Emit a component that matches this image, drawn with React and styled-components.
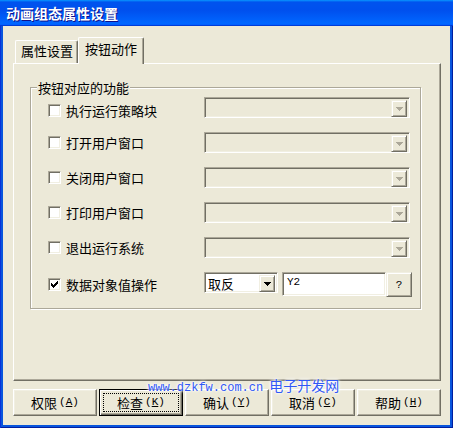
import styled, { createGlobalStyle, css } from 'styled-components';

const GlobalStyle = createGlobalStyle`
  html, body {
    margin: 0;
    padding: 0;
    background: #ece9d8;
  }
  body {
    font-family: "Noto Sans CJK SC", "Noto Sans", sans-serif;
    font-size: 13px;
    color: #000;
  }
  * {
    box-sizing: border-box;
  }
`;

const actions = [
  { label: '执行运行策略块', offset: 6 },
  { label: '打开用户窗口' },
  { label: '关闭用户窗口' },
  { label: '打印用户窗口' },
  { label: '退出运行系统' },
];

const buttons = [
  { text: '权限', key: 'A' },
  { text: '检查', key: 'K', primary: true },
  { text: '确认', key: 'Y' },
  { text: '取消', key: 'C' },
  { text: '帮助', key: 'H' },
];

const Arrow = ({ disabled }) => (
  <svg width="7" height="4" viewBox="0 0 7 4">
    <path
      d="M0 0h7v1h-1v1h-1v1h-1v1h-1v-1h-1v-1h-1v-1h-1z"
      fill={disabled ? '#aca899' : '#000'}
    />
  </svg>
);

const Check = () => (
  <svg width="7" height="7" viewBox="0 0 7 7">
    <path
      d="M0 2v3h1v1h1v1h1v-1h1v-1h1v-1h1v-1h1v-3h-1v1h-1v1h-1v1h-1v1h-1v-1h-1v-1z"
      fill="#000"
    />
  </svg>
);

const App = () => {
  return (
    <>
      <GlobalStyle />
      <Window>
        <TitleBar>
          <Title>动画组态属性设置</Title>
        </TitleBar>
        <Body>
          <TabStrip>
            <Tab>属性设置</Tab>
            <Tab $active>按钮动作</Tab>
          </TabStrip>
          <Panel>
            <Group>
              <Legend>按钮对应的功能</Legend>
              <Rows>
                {actions.map((a) => (
                  <Row key={a.label} $h={21}>
                    <Choice $offset={a.offset}>
                      <CheckBox />
                      <Label>{a.label}</Label>
                    </Choice>
                    <Combo $width={206} $disabled>
                      <ComboText />
                      <DropButton>
                        <Arrow disabled />
                      </DropButton>
                    </Combo>
                  </Row>
                ))}
                <Row $h={25}>
                  <Choice>
                    <CheckBox>
                      <Check />
                    </CheckBox>
                    <Label>数据对象值操作</Label>
                  </Choice>
                  <Controls>
                    <Combo $width={74}>
                      <ComboText>取反</ComboText>
                      <DropButton>
                        <Arrow />
                      </DropButton>
                    </Combo>
                    <TextField>Y2</TextField>
                    <SmallButton>?</SmallButton>
                  </Controls>
                </Row>
              </Rows>
            </Group>
          </Panel>
          <ButtonBar>
            {buttons.map((b) => (
              <DialogButton key={b.key} $primary={b.primary}>
                <FocusFrame $on={b.primary}>
                  {b.text}
                  <Key>
                    (<u>{b.key}</u>)
                  </Key>
                </FocusFrame>
              </DialogButton>
            ))}
          </ButtonBar>
        </Body>
        <Watermark>
          <Site>www.dzkfw.com.cn</Site>
          <SiteName>电子开发网</SiteName>
        </Watermark>
      </Window>
    </>
  );
};

const Window = styled.div`
  position: relative;
  width: 453px;
  height: 428px;
  display: flex;
  flex-direction: column;
  background: #0855dd;
  box-shadow: inset 1px 0 #0831d9, inset -1px 0 #001ea0, inset 0 -1px #001ea0;
`;

const TitleBar = styled.div`
  height: 26px;
  flex-shrink: 0;
  display: flex;
  align-items: center;
  padding-left: 6px;
  background: linear-gradient(
    180deg,
    #0997ff,
    #0053ee 8%,
    #0050ee 40%,
    #0066ff 88%,
    #0066ff 93%,
    #005bff 95%,
    #003dd7 96%,
    #003dd7
  );
`;

const Title = styled.span`
  color: #fff;
  font-size: 14px;
  font-weight: bold;
  line-height: 16px;
  text-shadow: 1px 1px #0f1089;
`;

const Body = styled.div`
  flex: 1;
  margin: 0 3px 3px;
  background: #ece9d8;
  padding: 11px 9px 9px 10px;
  display: flex;
  flex-direction: column;
`;

const TabStrip = styled.div`
  height: 26px;
  display: flex;
  align-items: flex-end;
  padding-left: 2px;
`;

const Tab = styled.div`
  position: relative;
  z-index: ${(p) => (p.$active ? 1 : 0)};
  height: ${(p) => (p.$active ? '27px' : '23px')};
  margin-bottom: ${(p) => (p.$active ? '-1px' : '0')};
  padding: ${(p) => (p.$active ? '3px 6px 0 6px' : '2px 4px 0 5px')};
  background: #ece9d8;
  border-top: 1px solid #fff;
  border-left: 1px solid #fff;
  border-right: 1px solid #716f64;
  box-shadow: inset -1px 0 #aca899;
  border-radius: 2px 2px 0 0;
  line-height: 15px;
  white-space: nowrap;
`;

const Panel = styled.div`
  width: 428px;
  height: 318px;
  background: #ece9d8;
  border: 1px solid;
  border-color: #fff #716f64 #716f64 #fff;
  box-shadow: inset -1px -1px #aca899;
  padding: 16px 0 0 16px;
`;

const Group = styled.fieldset`
  margin: 0;
  width: 391px;
  padding: 2px 0 11px 0;
  border: 1px solid #aca899;
  box-shadow: 1px 1px 0 #fff, inset 1px 1px 0 #fff;
`;

const Legend = styled.legend`
  margin-left: 6px;
  padding: 0 1px;
  line-height: 15px;
  background: #ece9d8;
`;

const Rows = styled.div`
  display: flex;
  flex-direction: column;
  gap: 14px;
  padding-left: 17px;
`;

const Row = styled.div`
  height: ${(p) => p.$h}px;
  display: flex;
  align-items: center;
`;

const Choice = styled.div`
  display: flex;
  align-items: center;
  margin-top: ${(p) => p.$offset || 0}px;
`;

const CheckBox = styled.span`
  width: 13px;
  height: 13px;
  display: flex;
  align-items: center;
  justify-content: center;
  background: #fff;
  border: 1px solid;
  border-color: #aca899 #fff #fff #aca899;
  box-shadow: inset 1px 1px #716f64, inset -1px -1px #f1efe2;
  margin-right: 5px;
`;

const Label = styled.span`
  width: 138px;
  line-height: 15px;
  white-space: nowrap;
`;

const Controls = styled.div`
  align-self: flex-start;
  display: flex;
  align-items: flex-start;
`;

const sunken = css`
  border: 1px solid;
  border-color: #aca899 #fff #fff #aca899;
  box-shadow: inset 1px 1px #716f64, inset -1px -1px #f1efe2;
`;

const raised = css`
  background: #ece9d8;
  border: 1px solid;
  border-color: #f1efe2 #716f64 #716f64 #f1efe2;
  box-shadow: inset 1px 1px #fff, inset -1px -1px #aca899;
`;

const Combo = styled.div`
  width: ${(p) => p.$width}px;
  height: 21px;
  display: flex;
  justify-content: space-between;
  padding: 2px;
  background: ${(p) => (p.$disabled ? '#ece9d8' : '#fff')};
  ${sunken}
`;

const ComboText = styled.span`
  padding-left: 1px;
  line-height: 17px;
`;

const DropButton = styled.span`
  width: 16px;
  height: 17px;
  display: flex;
  align-items: center;
  justify-content: center;
  padding-left: 1px;
  ${raised}
`;

const TextField = styled.div`
  width: 104px;
  height: 24px;
  margin-left: 4px;
  padding: 2px 4px;
  background: #fff;
  font-family: "Liberation Mono", monospace;
  font-size: 11px;
  line-height: 14px;
  ${sunken}
`;

const SmallButton = styled.div`
  width: 26px;
  height: 25px;
  display: flex;
  align-items: center;
  justify-content: center;
  font-family: "Liberation Mono", monospace;
  font-size: 11px;
  ${raised}
`;

const ButtonBar = styled.div`
  margin-top: 8px;
  display: flex;
  gap: 2px;
`;

const DialogButton = styled.button`
  width: 84px;
  height: 27px;
  padding: 3px;
  background: #ece9d8;
  color: #000;
  font-family: "Noto Sans CJK SC", sans-serif;
  font-size: 13px;
  border: 1px solid;
  border-color: #fff #716f64 #716f64 #fff;
  box-shadow: inset -1px -1px #aca899, inset 1px 1px #f1efe2;
  ${(p) =>
    p.$primary &&
    css`
      border-color: #000;
      box-shadow: inset 1px 1px #fff, inset -1px -1px #716f64,
        inset -2px -2px #aca899;
    `}
`;

const FocusFrame = styled.span`
  height: 100%;
  display: flex;
  align-items: center;
  justify-content: center;
  border: 1px dotted ${(p) => (p.$on ? '#000' : 'transparent')};
  line-height: 15px;
`;

const Key = styled.span`
  margin-left: 2px;
  font-family: "Liberation Mono", monospace;
  font-size: 11px;
`;

const Watermark = styled.div`
  position: absolute;
  left: 148px;
  top: 377px;
  display: flex;
  align-items: baseline;
  gap: 6px;
  color: #3158f6;
  text-shadow: 0 0 2px #fff, 0 0 3px #fff, 0 0 4px #fff;
`;

const Site = styled.span`
  font-family: "Liberation Mono", monospace;
  font-size: 12px;
`;

const SiteName = styled.span`
  font-family: "Noto Sans CJK SC", sans-serif;
  font-size: 14px;
  line-height: 16px;
`;

export default App;
